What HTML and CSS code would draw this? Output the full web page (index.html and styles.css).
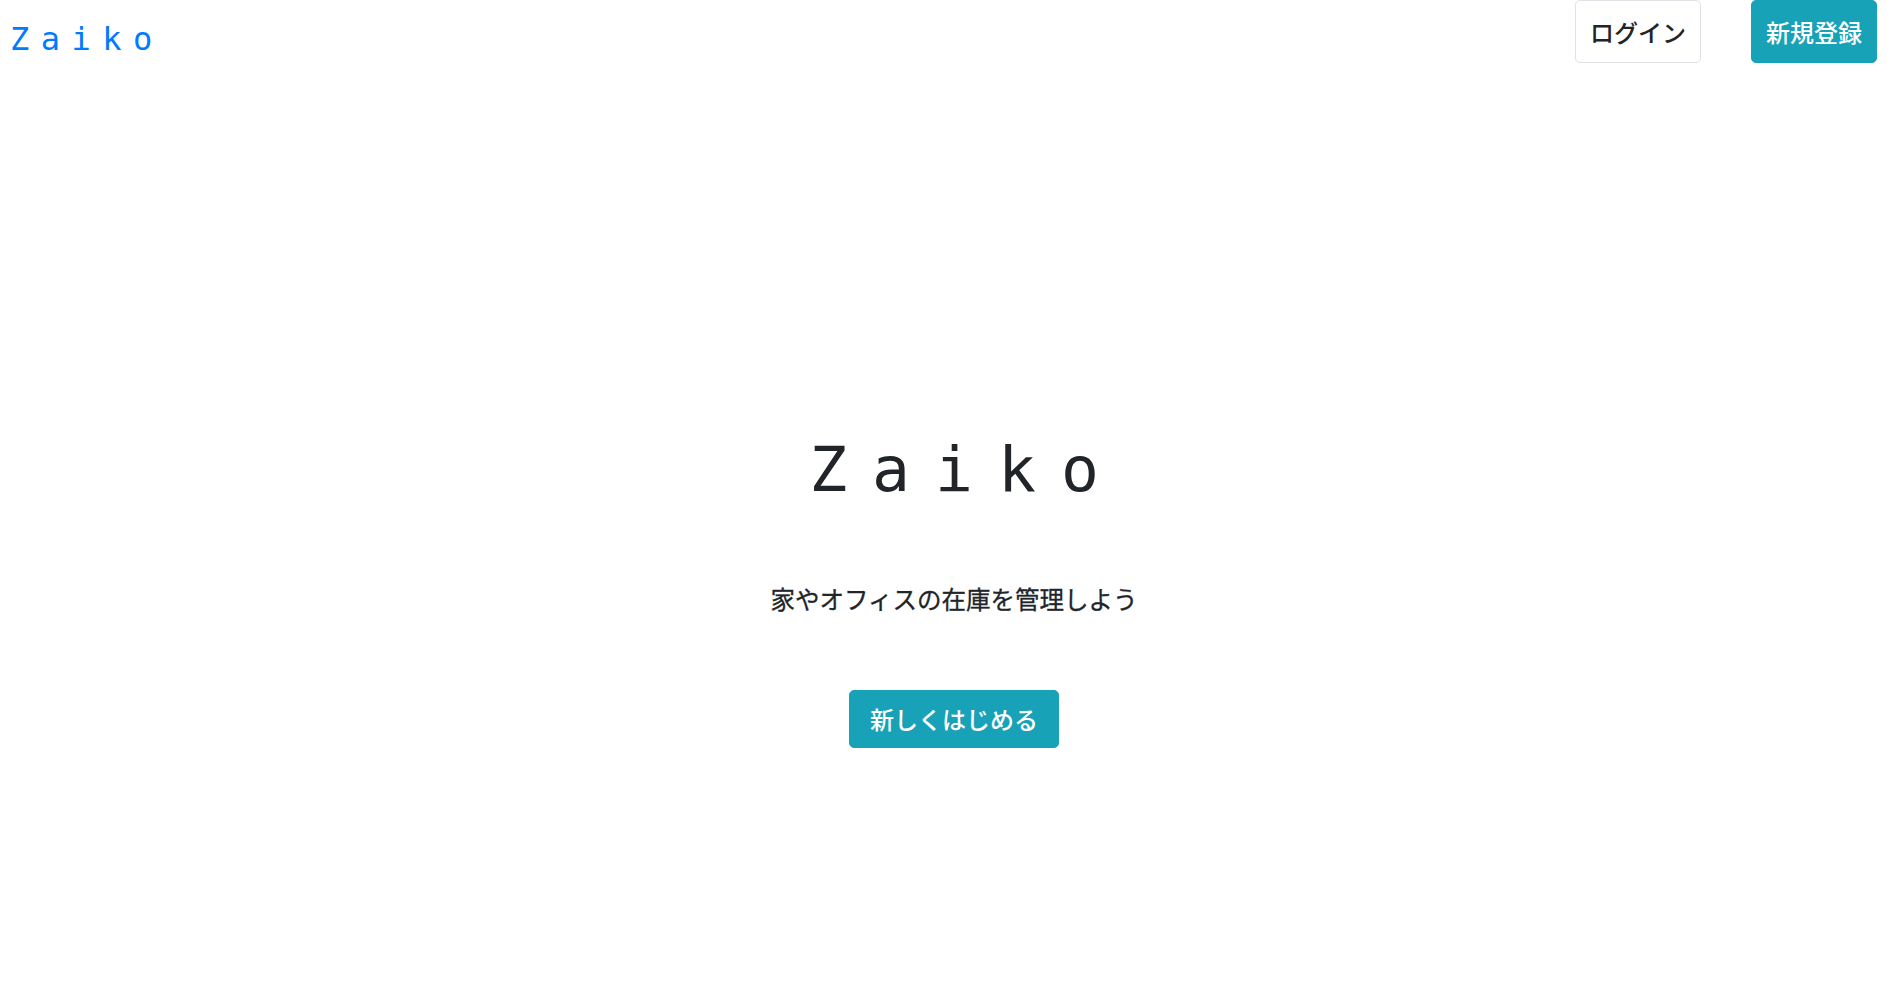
FILE: index.html
```html
<!DOCTYPE html>
<html lang="ja">
<head>
<meta charset="utf-8">
<title>Zaiko</title>
<link rel="stylesheet" href="styles.css">
</head>
<body>
<header class="navbar">
  <a class="brand" href="#">Zaiko</a>
  <nav class="nav-actions">
    <a class="btn btn-outline" href="#">ログイン</a>
    <a class="btn btn-info" href="#">新規登録</a>
  </nav>
</header>
<main class="hero">
  <h1 class="hero-title">Zaiko</h1>
  <p class="hero-lead">家やオフィスの在庫を管理しよう</p>
  <a class="btn btn-info btn-start" href="#">新しくはじめる</a>
</main>
</body>
</html>
```

FILE: styles.css
```css
* { box-sizing: border-box; }
html, body { margin: 0; padding: 0; background: #fff; }
body {
  font-family: "Noto Sans CJK JP", "Noto Sans", sans-serif;
  color: #212529;
  width: 1892px;
  height: 1000px;
  overflow: hidden;
}
a { text-decoration: none; }

.navbar {
  display: flex;
  justify-content: space-between;
  align-items: flex-start;
  height: 64px;
  padding: 0 15px 0 10px;
}
.brand {
  font-family: "DejaVu Sans Mono", monospace;
  font-size: 32px;
  letter-spacing: 11.5px;
  line-height: 38px;
  color: #007bff;
  margin-top: 20px;
}
.nav-actions {
  display: flex;
  gap: 50px;
}
.btn {
  display: inline-block;
  font-size: 24px;
  font-weight: 500;
  line-height: 36px;
  border-radius: 5px;
  border: 1px solid transparent;
  text-align: center;
}
.nav-actions .btn {
  padding: 13px 14px;
  height: 63px;
}
.btn-outline {
  background: #fff;
  color: #212529;
  border-color: #dee2e6;
}
.btn-info {
  background: #17a2b8;
  color: #fff;
  border-color: #17a2b8;
}

.hero {
  display: flex;
  flex-direction: column;
  align-items: center;
  padding-left: 16px;
  padding-top: 368px;
}
.hero-title {
  font-family: "DejaVu Sans Mono", monospace;
  font-weight: normal;
  font-size: 63px;
  line-height: 76px;
  letter-spacing: 25px;
  margin: 0 -25px 0 0;
}
.hero-lead {
  font-size: 24.5px;
  font-weight: 400;
  -webkit-text-stroke: 0.3px #212529;
  line-height: 37px;
  margin: 72px 0 0;
  color: #212529;
}
.btn-start {
  margin-top: 73px;
  padding: 10px 20px;
  height: 58px;
}
```
